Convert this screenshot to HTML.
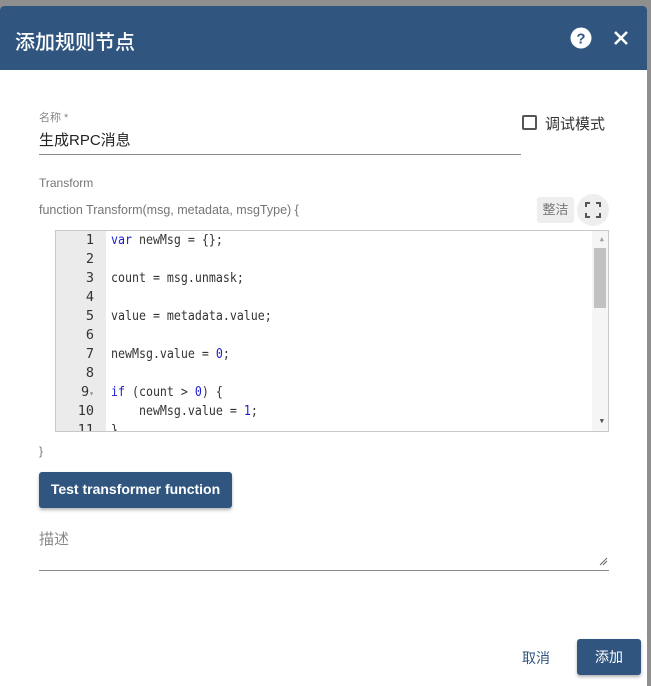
<!DOCTYPE html>
<html><head><meta charset="utf-8"><style>
*{box-sizing:border-box;margin:0;padding:0}
body{width:651px;height:680px;background:#8f8f8f;position:relative;overflow:hidden;font-family:"Liberation Sans","Noto Sans CJK SC",sans-serif}
.dlg{position:absolute;left:0;top:6px;width:647px;height:680px;background:#fff;border-radius:4px 4px 0 0;overflow:hidden}
.hdr{height:64px;background:#305680;color:#fff;position:relative}
.hdr .t{position:absolute;left:15px;top:20px;font-size:20px;font-weight:500}
.abs{position:absolute}
.lbl{color:#757575;font-size:12px}
.code{position:absolute;left:55px;top:230px;width:554px;height:202px;border:1px solid #c8c8c8;font-family:"DejaVu Sans Mono","Liberation Mono",monospace;font-size:11.6px;overflow:hidden}
.gut{position:absolute;left:0;top:0;width:50px;height:100%;background:#ebebeb}
.ln{position:absolute;height:19px;line-height:19px;color:#333;white-space:pre;font-size:13.5px;transform-origin:0 50%;}
.cd{transform:scaleX(0.86)}
.gn{width:38px;text-align:right}
.k{color:#1b1bd0}.n{color:#1b1bd0}
</style></head><body>
<div class="dlg">
<div class="hdr"><div class="t">添加规则节点</div>
<svg class="abs" style="left:570px;top:21px" width="22" height="22" viewBox="0 0 22 22"><circle cx="11" cy="11" r="10.5" fill="#fff"/><text x="11" y="16.5" text-anchor="middle" font-size="15" font-weight="bold" fill="#305680" font-family="Liberation Sans">?</text></svg>
<svg class="abs" style="left:613px;top:24px" width="16" height="16" viewBox="0 0 16 16"><path d="M2 2L14 14M14 2L2 14" stroke="#fff" stroke-width="2.6"/></svg>
</div>
</div>
<div class="abs lbl" style="left:39px;top:109px;font-size:11px;color:#888">名称 *</div>
<div class="abs" style="left:39px;top:129px;font-size:15px;color:#222">生成RPC消息</div>
<div class="abs" style="left:39px;top:154px;width:482px;height:1px;background:#8a8a8a"></div>
<div class="abs" style="left:522px;top:115px;width:15px;height:15px;border:2px solid #555;border-radius:2px"></div>
<div class="abs" style="left:545px;top:113px;font-size:15px;color:#333">调试模式</div>
<div class="abs lbl" style="left:39px;top:176px">Transform</div>
<div class="abs lbl" style="left:39px;top:203px;font-size:12.5px">function Transform(msg, metadata, msgType) {</div>
<div class="abs" style="left:537px;top:197px;width:37px;height:26px;background:#eee;border-radius:3px;color:#777;font-size:13px;line-height:26px;text-align:center">整洁</div>
<div class="abs" style="left:577px;top:194px;width:32px;height:32px;background:#eee;border-radius:50%"></div>
<svg class="abs" style="left:585px;top:202px" width="16" height="16" viewBox="0 0 16 16" fill="none" stroke="#555" stroke-width="2"><path d="M1 5V1H5M11 1H15V5M15 11V15H11M5 15H1V11"/></svg>
<div class="code">
<div class="gut"></div>
<div class="ln gn" style="top:0">1</div><div class="ln gn" style="top:19px">2</div><div class="ln gn" style="top:38px">3</div><div class="ln gn" style="top:57px">4</div><div class="ln gn" style="top:76px">5</div><div class="ln gn" style="top:95px">6</div><div class="ln gn" style="top:114px">7</div><div class="ln gn" style="top:133px">8</div><div class="ln gn" style="top:152px">9<span style="font-size:8px;color:#888">▾</span></div><div class="ln gn" style="top:171px">10</div><div class="ln gn" style="top:190px">11</div>
<div class="ln cd" style="left:55px;top:0"><span class="k">var</span> newMsg = {};</div>
<div class="ln cd" style="left:55px;top:38px">count = msg.unmask;</div>
<div class="ln cd" style="left:55px;top:76px">value = metadata.value;</div>
<div class="ln cd" style="left:55px;top:114px">newMsg.value = <span class="n">0</span>;</div>
<div class="ln cd" style="left:55px;top:152px"><span class="k">if</span> (count &gt; <span class="n">0</span>) {</div>
<div class="ln cd" style="left:55px;top:171px">    newMsg.value = <span class="n">1</span>;</div>
<div class="ln cd" style="left:55px;top:190px">}</div>
<div class="abs" style="right:0;top:0;width:16px;height:200px;background:#f5f5f5"></div>
<div class="abs" style="right:2px;top:17px;width:12px;height:60px;background:#c1c1c1"></div>
<div class="abs" style="right:4px;top:4px;font-size:7px;color:#a0a0a0">▲</div>
<div class="abs" style="right:4px;top:186px;font-size:7px;color:#505050">▼</div>
</div>
<div class="abs lbl" style="left:39px;top:444px">}</div>
<div class="abs" style="left:39px;top:472px;width:193px;height:36px;background:#305680;border-radius:3px;color:#fff;font-size:14px;font-weight:bold;line-height:34px;text-align:center;box-shadow:0 2px 3px rgba(0,0,0,.3)">Test transformer function</div>
<div class="abs" style="left:39px;top:528px;font-size:15px;color:#888">描述</div>
<div class="abs" style="left:39px;top:570px;width:570px;height:1px;background:#8a8a8a"></div>
<svg class="abs" style="left:599px;top:557px" width="9" height="9" viewBox="0 0 9 9" stroke="#666" stroke-width="1"><path d="M1 8L8 1M4 8L8 4"/></svg>
<div class="abs" style="left:522px;top:648px;font-size:14px;color:#305680">取消</div>
<div class="abs" style="left:577px;top:639px;width:64px;height:36px;background:#305680;border-radius:3px;color:#fff;font-size:14px;line-height:36px;text-align:center;box-shadow:0 2px 3px rgba(0,0,0,.3)">添加</div>
</body></html>
